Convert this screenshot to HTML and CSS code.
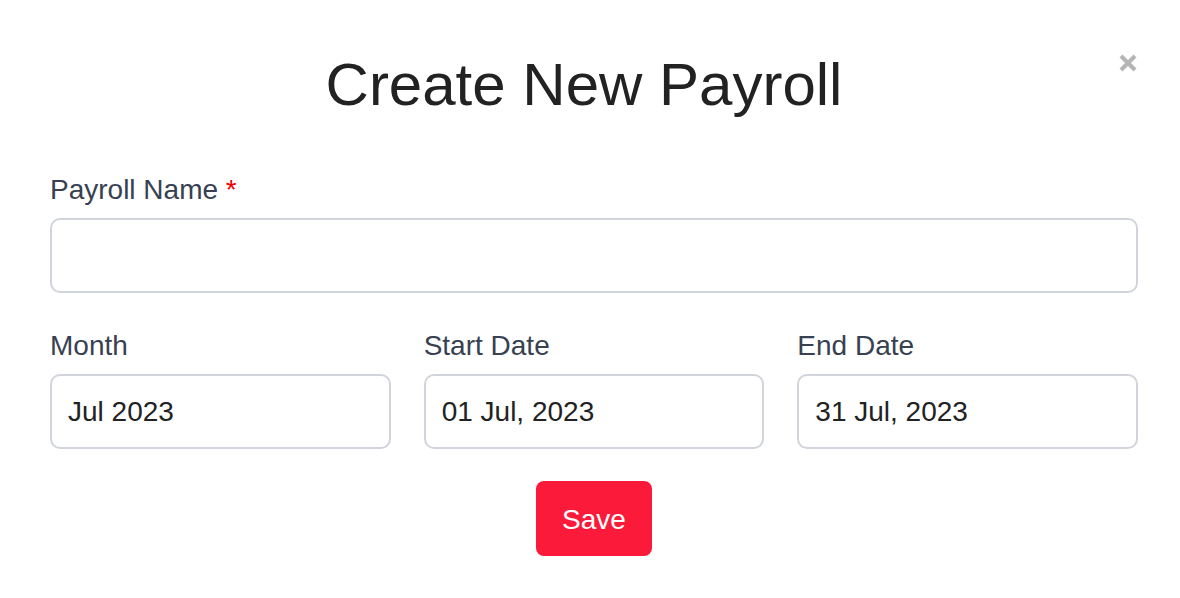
FILE: index.html
```html
<!DOCTYPE html>
<html lang="en">
<head>
<meta charset="utf-8">
<title>Create New Payroll</title>
<link rel="stylesheet" href="styles.css">
</head>
<body>
<div class="modal">
  <div class="modal-header">
    <h1 class="modal-title">Create New Payroll</h1>
    <button class="close-btn" aria-label="Close">
      <svg width="20" height="20" viewBox="0 0 20 20"><path d="M3 3L17 17M17 3L3 17" stroke="#b5b5b5" stroke-width="4.2" stroke-linecap="butt"/></svg>
    </button>
  </div>
  <form class="form">
    <div class="field">
      <label class="label">Payroll Name <span class="req">*</span></label>
      <input class="input" type="text">
    </div>
    <div class="row">
      <div class="field">
        <label class="label">Month</label>
        <input class="input" type="text" value="Jul 2023">
      </div>
      <div class="field">
        <label class="label">Start Date</label>
        <input class="input" type="text" value="01 Jul, 2023">
      </div>
      <div class="field">
        <label class="label">End Date</label>
        <input class="input" type="text" value="31 Jul, 2023">
      </div>
    </div>
    <div class="actions">
      <button type="button" class="save-btn">Save</button>
    </div>
  </form>
</div>
</body>
</html>
```
FILE: styles.css
```css
* { box-sizing: border-box; }
html, body { margin: 0; padding: 0; background: #fff; }
body {
  font-family: "Liberation Sans", Arial, Helvetica, sans-serif;
  width: 1180px;
  height: 598px;
  overflow: hidden;
}
.modal {
  padding: 50px 42px 0 50px;
}
.modal-header {
  display: flex;
  align-items: flex-start;
}
.modal-title {
  flex: 1;
  margin: 0;
  text-align: center;
  font-size: 60px;
  line-height: 70px;
  font-weight: 400;
  color: #222222;
}
.close-btn {
  width: 20px;
  height: 20px;
  padding: 0;
  margin-top: 3px;
  border: 0;
  background: none;
  display: flex;
  cursor: pointer;
}
.form {
  margin-top: 54px;
  width: 1088px;
  display: flex;
  flex-direction: column;
}
.field {
  display: flex;
  flex-direction: column;
  gap: 12px;
}
.label {
  font-size: 28px;
  line-height: 32px;
  color: #374151;
}
.req { color: #ee0000; }
.input {
  height: 75px;
  border: 2px solid #d1d5db;
  border-radius: 10px;
  padding: 0 16px;
  font-family: inherit;
  font-size: 28px;
  color: #222222;
  background: #fff;
  outline: none;
  width: 100%;
}
.row {
  margin-top: 37px;
  display: grid;
  grid-template-columns: repeat(3, 1fr);
  gap: 33px;
}
.actions {
  margin-top: 32px;
  display: flex;
  justify-content: center;
}
.save-btn {
  width: 116px;
  height: 75px;
  border: 0;
  border-radius: 8px;
  padding: 2px 0 0;
  background: #fb1a3a;
  color: #ffffff;
  font-family: inherit;
  font-size: 28px;
  cursor: pointer;
}
```
